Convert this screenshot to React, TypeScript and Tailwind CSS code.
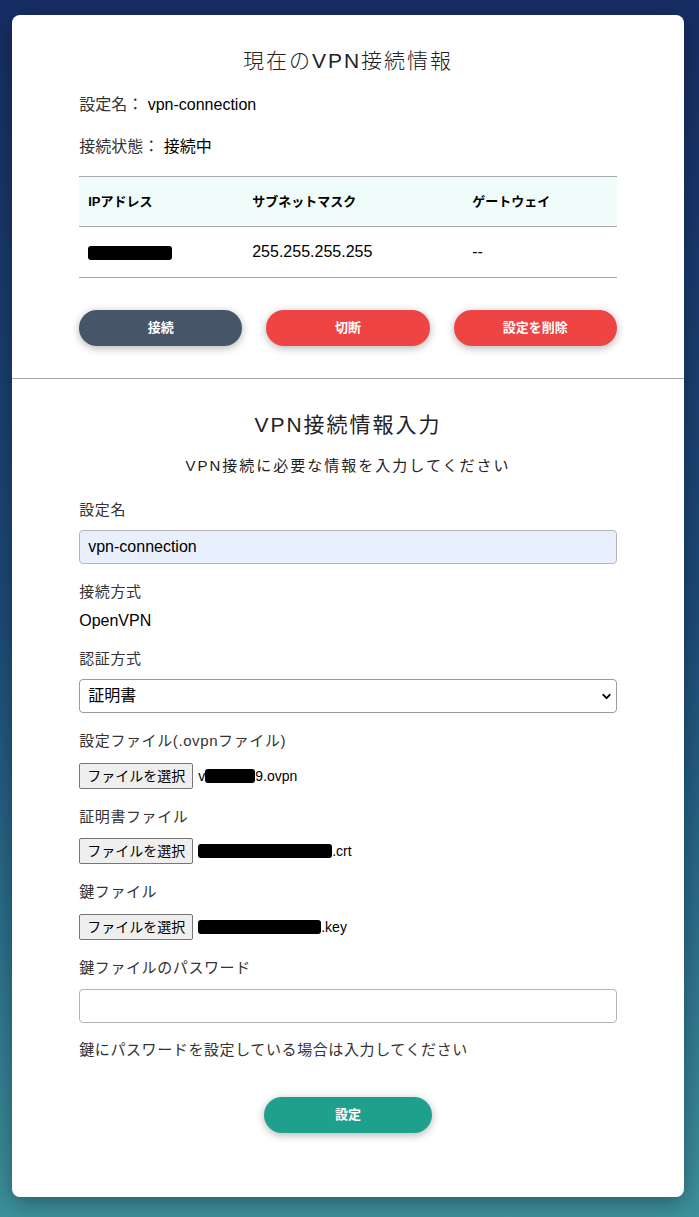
import { ChevronDown } from "lucide-react";

const font = { fontFamily: '"Liberation Sans", "Noto Sans CJK JP", sans-serif' };

function Redact({ className }: { className: string }) {
  return <span className={`inline-block rounded-[3px] bg-black blur-[0.6px] ${className}`} />;
}

function FileField({ prefix, blob, ext }: { prefix?: string; blob: string; ext: string }) {
  return (
    <div className="flex h-[26px] items-center">
      <button
        type="button"
        className="h-[26px] rounded-[2px] border border-[#767676] bg-[#efefef] px-[7px] text-[14px] text-black"
      >
        ファイルを選択
      </button>
      <span className="ml-[5px] flex items-center text-[14px] text-black">
        {prefix && <span>{prefix}</span>}
        <Redact className={`h-[14px] ${blob}`} />
        <span>{ext}</span>
      </span>
    </div>
  );
}

function Label({ children, className = "" }: { children: React.ReactNode; className?: string }) {
  return <p className={`text-[15px] leading-6 tracking-[0.6px] text-[#333] ${className}`}>{children}</p>;
}

export default function App() {
  return (
    <div
      style={font}
      className="min-h-screen bg-gradient-to-b from-[#172d64] via-[#1d4a78] to-[#3d929c] pb-5 pl-3 pr-[15px] pt-[15px]"
    >
      <div className="rounded-lg bg-white shadow-[0_6px_24px_rgba(0,0,0,0.35)]">
        {/* current connection */}
        <section className="pt-8 pb-8">
          <div className="mx-auto w-4/5">
            <h1 className="text-center text-[21px] font-light leading-7 tracking-[2px] text-[#222]">現在のVPN接続情報</h1>
            <p className="mt-[18px] text-[16px] leading-6 text-[#333]">
              設定名： <span className="text-black">vpn-connection</span>
            </p>
            <p className="mt-[18px] text-[16px] leading-6 text-[#333]">
              接続状態： <span className="text-black">接続中</span>
            </p>
            <table className="mt-[17px] w-full border-y border-[#aaa] text-left">
              <thead>
                <tr className="h-[50px] border-b border-[#aaa] bg-[#effcf9]">
                  <th className="w-[164px] pl-[9px] text-[13px] font-bold text-black">IPアドレス</th>
                  <th className="w-[220px] pl-[9px] text-[13px] font-bold text-black">サブネットマスク</th>
                  <th className="pl-[9px] text-[13px] font-bold text-black">ゲートウェイ</th>
                </tr>
              </thead>
              <tbody>
                <tr className="h-[51px]">
                  <td className="pl-[9px]">
                    <Redact className="h-[14px] w-[84px] align-middle" />
                  </td>
                  <td className="pl-[9px] text-[16px] text-black">255.255.255.255</td>
                  <td className="pl-[9px] text-[16px] text-black">--</td>
                </tr>
              </tbody>
            </table>
            <div className="mt-8 grid grid-cols-3 gap-6">
              <button className="h-9 rounded-full bg-[#475569] text-[13px] font-bold text-white shadow-[0_2px_8px_rgba(0,0,0,0.3)]">
                接続
              </button>
              <button className="h-9 rounded-full bg-[#ef4444] text-[13px] font-bold text-white shadow-[0_2px_8px_rgba(0,0,0,0.3)]">
                切断
              </button>
              <button className="h-9 rounded-full bg-[#ef4444] text-[13px] font-bold text-white shadow-[0_2px_8px_rgba(0,0,0,0.3)]">
                設定を削除
              </button>
            </div>
          </div>
        </section>

        {/* input form */}
        <section className="border-t border-[#aaa] pt-8 pb-16">
          <div className="mx-auto w-4/5">
            <h2 className="text-center text-[21px] leading-7 tracking-[2px] text-[#222]">VPN接続情報入力</h2>
            <p className="mt-[15px] text-center text-[15px] leading-6 tracking-[2px] text-[#222]">
              VPN接続に必要な情報を入力してください
            </p>

            <Label className="mt-5">設定名</Label>
            <input
              readOnly
              value="vpn-connection"
              className="mt-2 h-[34px] w-full rounded border border-[#b5b5b5] bg-[#e8f0fe] px-2 text-[16px] text-black outline-none"
            />

            <Label className="mt-4">接続方式</Label>
            <p className="mt-[5px] text-[16px] leading-6 text-black">OpenVPN</p>

            <Label className="mt-[14px]">認証方式</Label>
            <div className="relative mt-2">
              <select className="h-[34px] w-full appearance-none rounded border border-[#999] bg-white px-2 text-[16px] text-black outline-none">
                <option>証明書</option>
              </select>
              <ChevronDown className="pointer-events-none absolute right-[4px] top-[11px] h-[13px] w-[13px] text-black" strokeWidth={3.5} />
            </div>

            <Label className="mt-4">設定ファイル(.ovpnファイル)</Label>
            <div className="mt-[10px]">
              <FileField prefix="v" blob="w-[50px]" ext="9.ovpn" />
            </div>

            <Label className="mt-4">証明書ファイル</Label>
            <div className="mt-[9px]">
              <FileField blob="w-[134px]" ext=".crt" />
            </div>

            <Label className="mt-4">鍵ファイル</Label>
            <div className="mt-[10px]">
              <FileField blob="w-[123px]" ext=".key" />
            </div>

            <Label className="mt-4">鍵ファイルのパスワード</Label>
            <input
              type="password"
              className="mt-[9px] h-[34px] w-full rounded border border-[#b5b5b5] bg-white px-2 text-[16px] outline-none"
            />

            <Label className="mt-[15px]">鍵にパスワードを設定している場合は入力してください</Label>

            <div className="mt-[35px] flex justify-center">
              <button className="h-9 w-[168px] rounded-full bg-[#1fa08d] text-[13px] font-bold text-white shadow-[0_2px_8px_rgba(0,0,0,0.3)]">
                設定
              </button>
            </div>
          </div>
        </section>
      </div>
    </div>
  );
}
